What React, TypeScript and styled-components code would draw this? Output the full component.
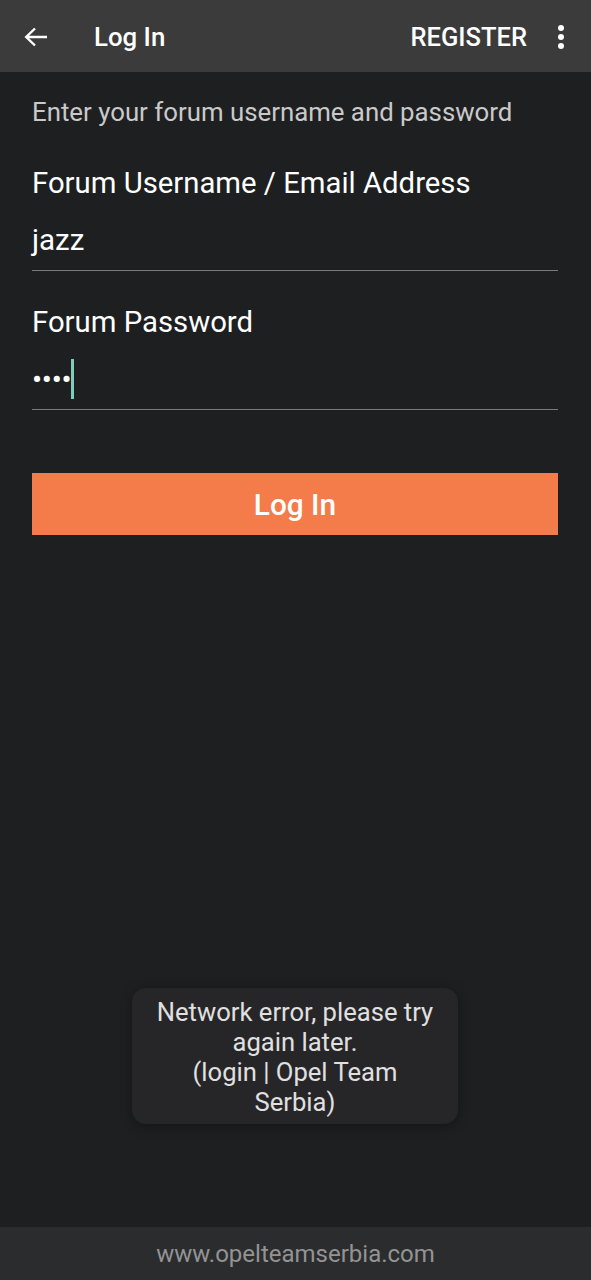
import React from "react";
import styled, { createGlobalStyle } from "styled-components";

const GlobalStyle = createGlobalStyle`
  html, body {
    margin: 0;
    padding: 0;
    background: #1e1f21;
    font-family: Roboto, "Noto Sans", sans-serif;
  }
`;

const Page = styled.div`
  display: flex;
  flex-direction: column;
  height: 1280px;
  width: 591px;
  background: #1e1f21;
`;

const Toolbar = styled.header`
  display: flex;
  align-items: center;
  height: 72px;
  padding: 2px 26px 0 24px;
  background: #3b3b3b;
  color: #fff;
  box-sizing: border-box;
`;

const IconButton = styled.button`
  display: flex;
  align-items: center;
  justify-content: center;
  background: none;
  border: none;
  padding: 0;
  color: #fff;
`;

const Title = styled.h1`
  flex: 1;
  margin: 0 0 0 46px;
  font-size: 25.8px;
  font-weight: 500;
`;

const Action = styled.span`
  font-size: 25.5px;
  font-weight: 500;
  margin-right: 30px;
`;

const Content = styled.main`
  flex: 1;
  display: flex;
  flex-direction: column;
  padding: 0 33px 0 32px;
  position: relative;
`;

const Hint = styled.p`
  margin: 25px 0 0;
  font-size: 25.8px;
  color: #c9c9c9;
  line-height: 30px;
`;

const Field = styled.div<{ $top: number }>`
  display: flex;
  flex-direction: column;
  margin-top: ${(p) => p.$top}px;
  border-bottom: 1px solid #7a7a7a;
`;

const Label = styled.label`
  font-size: 29.3px;
  color: #fff;
  line-height: 34px;
`;

const Value = styled.div`
  display: flex;
  align-items: center;
  height: 70px;
  padding: 22px 0 12px;
  line-height: 36px;
  font-size: 29.5px;
  color: #fff;
  box-sizing: border-box;
`;

const Dots = styled.span`
  font-size: 30px;
  letter-spacing: -0.3px;
  margin-top: 2px;
`;

const Caret = styled.span`
  display: inline-block;
  width: 3px;
  height: 40px;
  background: #7fcbc0;
  margin-left: 0;
`;

const SubmitButton = styled.button`
  margin-top: 63px;
  height: 62px;
  border: none;
  background: #f47c4a;
  color: #fff;
  font-family: Roboto, sans-serif;
  font-size: 29.8px;
  font-weight: 500;
`;

const Toast = styled.div`
  position: absolute;
  left: 132px;
  top: 916px;
  width: 326px;
  height: 136px;
  box-sizing: border-box;
  border-radius: 14px;
  background: #262628;
  color: #e0e0e0;
  font-size: 25.6px;
  line-height: 30px;
  text-align: center;
  padding: 9px 20px;
  box-shadow: 0 2px 12px rgba(0, 0, 0, 0.35);
`;

const Footer = styled.footer`
  height: 53px;
  display: flex;
  align-items: center;
  justify-content: center;
  background: #2b2c2e;
  color: #939393;
  font-size: 24px;
`;

export default function App() {
  return (
    <Page>
      <GlobalStyle />
      <Toolbar>
        <IconButton aria-label="Back">
          <svg width="24" height="20" viewBox="0 0 24 20" fill="none" stroke="#fff" strokeWidth="2.4">
            <path d="M23 10H2M11 1.5L2.2 10l8.8 8.5" />
          </svg>
        </IconButton>
        <Title>Log In</Title>
        <Action>REGISTER</Action>
        <IconButton aria-label="More">
          <svg width="8" height="26" viewBox="0 0 8 26" fill="#fff">
            <circle cx="4" cy="4" r="3" />
            <circle cx="4" cy="13" r="3" />
            <circle cx="4" cy="22" r="3" />
          </svg>
        </IconButton>
      </Toolbar>
      <Content>
        <Hint>Enter your forum username and password</Hint>
        <Field $top={39}>
          <Label>Forum Username / Email Address</Label>
          <Value>jazz</Value>
        </Field>
        <Field $top={34}>
          <Label>Forum Password</Label>
          <Value>
            <Dots>••••</Dots>
            <Caret />
          </Value>
        </Field>
        <SubmitButton>Log In</SubmitButton>
        <Toast>
          Network error, please try again later.
          <br />
          (login | Opel Team Serbia)
        </Toast>
      </Content>
      <Footer>www.opelteamserbia.com</Footer>
    </Page>
  );
}
